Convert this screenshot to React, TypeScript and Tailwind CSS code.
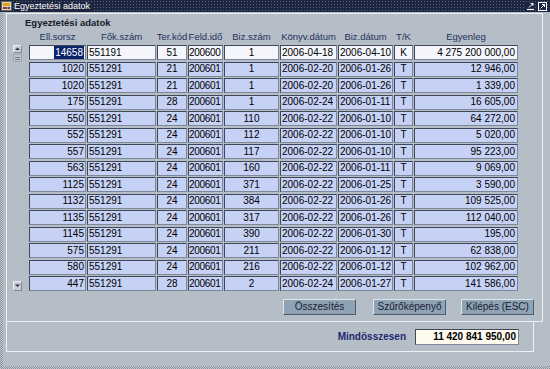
import React from 'react';

type Row = string[];

const ROWS: Row[] = [
  ['14658', '551191', '51', '200600', '1', '2006-04-18', '2006-04-10', 'K', '4 275 200 000,00'],
  ['1020', '551291', '21', '200601', '1', '2006-02-20', '2006-01-26', 'T', '12 946,00'],
  ['1020', '551291', '21', '200601', '1', '2006-02-20', '2006-01-26', 'T', '1 339,00'],
  ['175', '551291', '28', '200601', '1', '2006-02-24', '2006-01-11', 'T', '16 605,00'],
  ['550', '551291', '24', '200601', '110', '2006-02-22', '2006-01-10', 'T', '64 272,00'],
  ['552', '551291', '24', '200601', '112', '2006-02-22', '2006-01-10', 'T', '5 020,00'],
  ['557', '551291', '24', '200601', '117', '2006-02-22', '2006-01-10', 'T', '95 223,00'],
  ['563', '551291', '24', '200601', '160', '2006-02-22', '2006-01-11', 'T', '9 069,00'],
  ['1125', '551291', '24', '200601', '371', '2006-02-22', '2006-01-25', 'T', '3 590,00'],
  ['1132', '551291', '24', '200601', '384', '2006-02-22', '2006-01-26', 'T', '109 525,00'],
  ['1135', '551291', '24', '200601', '317', '2006-02-22', '2006-01-26', 'T', '112 040,00'],
  ['1145', '551291', '24', '200601', '390', '2006-02-22', '2006-01-30', 'T', '195,00'],
  ['575', '551291', '24', '200601', '211', '2006-02-22', '2006-01-12', 'T', '62 838,00'],
  ['580', '551291', '24', '200601', '216', '2006-02-22', '2006-01-12', 'T', '102 962,00'],
  ['447', '551291', '28', '200601', '2', '2006-02-24', '2006-01-27', 'T', '141 586,00'],
];

// widths + alignment for each column
const COLS = [
  { label: 'Ell.sorsz', cls: 'w-[57px] justify-end pr-px' },
  { label: 'Fők.szám', cls: 'w-[69px] justify-start pl-px' },
  { label: 'Ter.kód', cls: 'w-[30px] justify-center' },
  { label: 'Feld.idő', cls: 'w-[35px] justify-start tracking-[-0.3px]' },
  { label: 'Biz.szám', cls: 'w-[55px] justify-center' },
  { label: 'Könyv.dátum', cls: 'w-[57px] justify-start pl-px' },
  { label: 'Biz.dátum', cls: 'w-[55px] justify-start pl-px' },
  { label: 'T/K', cls: 'w-[19px] justify-center' },
  { label: 'Egyenleg', cls: 'w-[104px] justify-end pr-[2px]' },
];

const HEAD_W = ['w-[57px]', 'w-[69px]', 'w-[30px]', 'w-[35px]', 'w-[55px]', 'w-[57px]', 'w-[55px]', 'w-[19px]', 'w-[104px]'];

function Cell({ text, cls, first, selected }: { text: string; cls: string; first: boolean; selected?: boolean }) {
  return (
    <div
      className={[
        'flex h-[15px] shrink-0 items-center overflow-hidden whitespace-nowrap border border-t-[#3f4858] border-l-[#3f4858] border-b-[#7c8797] border-r-[#7c8797] text-[10px] leading-none text-black',
        first ? 'bg-[#f4f6fb]' : 'bg-[#c6d2f5]',
        cls,
      ].join(' ')}
    >
      {selected ? <span className="bg-[#0a246a] px-px py-[2px] text-white">{text}</span> : text}
    </div>
  );
}

function WinButton({ children }: { children: React.ReactNode }) {
  return (
    <button className="flex h-[16px] w-[73px] items-center justify-center border border-t-[#dfe5ec] border-l-[#dfe5ec] border-b-[#4f5b69] border-r-[#4f5b69] bg-[#8fa3b7] text-[10px] leading-none text-[#18212e]">
      {children}
    </button>
  );
}

export default function App() {
  return (
    <div className="flex h-[369px] w-[550px] flex-col overflow-hidden bg-[#9aa2ac] font-['Liberation_Sans',Arial,sans-serif]">
      {/* title bar */}
      <div className="flex h-[12px] shrink-0 items-center bg-[#1d2640] bg-[radial-gradient(circle,#5b6681_0.8px,transparent_0.9px)] bg-size-[3px_3px]">
        <svg width="11" height="10" viewBox="0 0 11 10" className="ml-[1px] shrink-0">
          <rect x="0.5" y="0.5" width="10" height="9" fill="#d8d4c8" stroke="#6b6450" />
          <rect x="2" y="2" width="7" height="3" fill="#e0a020" />
          <rect x="2" y="6" width="4" height="2" fill="#b03020" />
          <rect x="6.5" y="6" width="2.5" height="2" fill="#3050a0" />
        </svg>
        <span className="ml-[2px] bg-[#1d2640] pr-[2px] text-[9px] leading-none text-white">Egyeztetési adatok</span>
        <div className="flex-1" />
        <svg width="9" height="9" viewBox="0 0 9 9" className="mr-[3px]">
          <rect x="0" y="0" width="9" height="9" fill="#1d2640" />
          <path d="M1 7.5 H8" stroke="#ffffff" strokeWidth="1.2" />
          <path d="M3 5.5 L7 1.5 M7 1.5 V4 M7 1.5 H4.5" stroke="#ffffff" strokeWidth="1" fill="none" />
        </svg>
        <svg width="9" height="9" viewBox="0 0 9 9" className="mr-[3px]">
          <rect x="0.5" y="0.5" width="8" height="8" fill="#1d2640" stroke="#ffffff" strokeWidth="1" />
          <path d="M2.5 6.5 L6.5 2.5 M6.5 2.5 V5 M6.5 2.5 H4" stroke="#ffffff" strokeWidth="1" fill="none" />
        </svg>
      </div>

      {/* window body with dotted left / bottom frame */}
      <div className="flex flex-1 bg-[repeating-conic-gradient(#8a929c_0_25%,#c2c8cf_0_50%)] bg-size-[2px_2px] pl-[3px] pb-[3px]">
        <div className="flex flex-1 flex-col bg-[#b5bdc7] pt-px">
          {/* main group panel */}
          <div className="ml-[3px] mr-[7px] flex h-[309px] flex-col border-t border-l border-r border-b border-[#eef1f4]">
            <div className="ml-[18px] mt-[3px] h-[12px] text-[9.5px] font-bold leading-[12px] text-[#141a26]">
              Egyeztetési adatok
            </div>
            {/* column headers */}
            <div className="mt-[2px] flex h-[12px] items-center gap-px pl-[22px]">
              {COLS.map((c, i) => (
                <div key={c.label} className={`${HEAD_W[i]} flex shrink-0 justify-center text-[9.5px] leading-none whitespace-nowrap text-[#22305e]`}>
                  {c.label}
                </div>
              ))}
            </div>
            <div className="mt-[2px] flex">
              {/* scroll widget */}
              <div className="ml-[6px] mr-[7px] flex h-[247px] w-[9px] flex-col justify-between">
                <div className="flex flex-col gap-px">
                  <div className="flex h-[8px] w-[9px] items-center justify-center border border-t-[#eef1f4] border-l-[#eef1f4] border-b-[#7c8797] border-r-[#7c8797] bg-[#c9ced6]">
                    <svg width="5" height="4" viewBox="0 0 5 4">
                      <path d="M0 3 L2.5 0.5 L5 3 Z" fill="#2a3140" />
                    </svg>
                  </div>
                  <div className="flex h-[8px] w-[9px] flex-col items-center justify-center gap-px border border-[#9aa3ae] bg-[#c0c6ce]">
                    <div className="h-px w-[5px] bg-[#6d7684]" />
                    <div className="h-px w-[5px] bg-[#6d7684]" />
                  </div>
                </div>
                <div className="mb-px flex h-[10px] w-[9px] items-center justify-center border border-t-[#eef1f4] border-l-[#eef1f4] border-b-[#7c8797] border-r-[#7c8797] bg-[#c9ced6]">
                  <svg width="5" height="4" viewBox="0 0 5 4">
                    <path d="M0 0.5 L2.5 3 L5 0.5 Z" fill="#2a3140" />
                  </svg>
                </div>
              </div>
              {/* records */}
              <div className="flex flex-col gap-[1.5px]">
                {ROWS.map((r, ri) => (
                  <div key={ri} className="flex gap-px">
                    {r.map((v, ci) => (
                      <Cell key={ci} text={v} cls={COLS[ci].cls} first={ri === 0} selected={ri === 0 && ci === 0} />
                    ))}
                  </div>
                ))}
              </div>
            </div>
            {/* action buttons */}
            <div className="mt-[7px] mr-[8px] flex justify-end gap-[15px]">
              <div className="mr-[2px]">
                <WinButton>Összesítés</WinButton>
              </div>
              <WinButton>Szűrőképenyő</WinButton>
              <WinButton>Kilépés (ESC)</WinButton>
            </div>
          </div>

          {/* grand total box */}
          <div className="ml-[3px] flex h-[30px] w-[528px] items-center justify-end border-l border-r border-b border-[#eef1f4] pr-[14px]">
            <span className="mr-[9px] text-[10px] font-bold leading-none text-[#1c2870]">Mindösszesen</span>
            <div className="flex h-[16px] w-[104px] items-center justify-end border border-t-[#3f4858] border-l-[#3f4858] border-b-[#7c8797] border-r-[#7c8797] bg-[#fffaee] pr-[2px] text-[10px] font-bold leading-none text-black">
              11 420 841 950,00
            </div>
          </div>
        </div>
      </div>
    </div>
  );
}
